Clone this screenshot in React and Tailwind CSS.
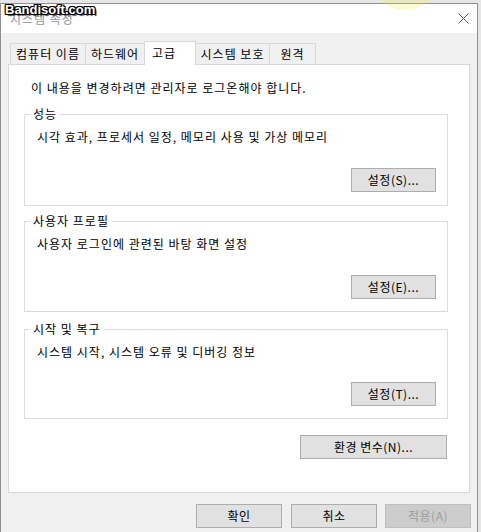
import React from "react";

const font = { fontFamily: '"Noto Sans CJK KR", "Noto Sans", sans-serif' };

const Button = ({ children, width = "w-[85px]", disabled = false }) => (
  <button
    type="button"
    className={`${width} h-[24px] border text-[12px] leading-[16px] tracking-[0.5px] flex items-center justify-center ${
      disabled
        ? "bg-[#cccccc] border-[#bfbfbf] text-[#9d9d9d]"
        : "bg-[#e1e1e1] border-[#adadad] text-black"
    }`}
  >
    {children}
  </button>
);

const Group = ({ title, text, action, height, margin, gap = "mt-[23px]" }) => (
  <div
    className={`relative ml-[15px] w-[424px] ${height} ${margin} border border-[#dcdcdc]`}
  >
    <span className="absolute top-[-9px] left-[5px] bg-white px-[3px] text-[12px] leading-[16px] tracking-[1px]">
      {title}
    </span>
    <div className="pt-[14px] pl-[12px] text-[12px] leading-[16px] tracking-[1px]">{text}</div>
    <div className={`flex justify-end pr-[11px] ${gap}`}>
      <Button>{action}</Button>
    </div>
  </div>
);

const tabs = [
  { label: "컴퓨터 이름", w: "w-[76px]" },
  { label: "하드웨어", w: "w-[60px]" },
  { label: "고급", w: "w-[52px]", active: true },
  { label: "시스템 보호", w: "w-[75px]" },
  { label: "원격", w: "w-[47px]" },
];

export default function App() {
  return (
    <div
      className="relative w-[481px] h-[532px] overflow-hidden bg-[#e6e6e6] pt-[3px] text-black"
      style={font}
    >
      <div className="w-[478px] h-[529px] border-l border-t border-r border-[#8f8f8f] flex flex-col">
        {/* title bar */}
        <div className="h-[29px] bg-white flex items-center justify-between pl-[9px] pr-[8px]">
          <span className="text-[12px] leading-[16px] tracking-[1px] text-[#8c96a0]">시스템 속성</span>
          <svg width="11" height="11" viewBox="0 0 11 11">
            <path d="M0.5 0.5 L10.5 10.5 M10.5 0.5 L0.5 10.5" stroke="#5a5a5a" strokeWidth="1" fill="none" />
          </svg>
        </div>

        {/* body */}
        <div className="flex-1 bg-[#f0f0f0] pt-[10px]">
          <div className="relative z-10 flex items-end h-[22px] pl-[9px]">
            {tabs.map((t, i) =>
              t.active ? (
                <div
                  key={t.label}
                  className={`${t.w} h-[24px] -ml-px bg-white border-l border-t border-r border-[#d9d9d9] pl-[7px] pt-[3px] text-[12px] leading-[16px] tracking-[1px]`}
                >
                  {t.label}
                </div>
              ) : (
                <div
                  key={t.label}
                  className={`${t.w} h-[21px] mb-[1px] ${i > 0 ? "-ml-px" : ""} bg-[#f0f0f0] border-l border-t border-r border-[#d9d9d9] flex items-center justify-center text-[12px] leading-[16px] tracking-[1px]`}
                >
                  {t.label}
                </div>
              )
            )}
          </div>

          <div className="-mt-px ml-[7px] w-[462px] h-[429px] bg-white border border-[#d9d9d9]">
            <div className="pt-[15px] pl-[22px] text-[12px] leading-[16px] tracking-[1px]">
              이 내용을 변경하려면 관리자로 로그온해야 합니다.
            </div>
            <Group
              title="성능"
              text="시각 효과, 프로세서 일정, 메모리 사용 및 가상 메모리"
              action="설정(S)..."
              height="h-[92px]"
              margin="mt-[18px]"
            />
            <Group
              title="사용자 프로필"
              text="사용자 로그인에 관련된 바탕 화면 설정"
              action="설정(E)..."
              height="h-[91px]"
              margin="mt-[15px]"
            />
            <Group
              title="시작 및 복구"
              text="시스템 시작, 시스템 오류 및 디버깅 정보"
              action="설정(T)..."
              height="h-[90px]"
              margin="mt-[17px]"
              gap="mt-[22px]"
            />
            <div className="flex justify-end pr-[22px] mt-[16px]">
              <Button width="w-[147px]">환경 변수(N)...</Button>
            </div>
          </div>

          <div className="flex justify-end pr-[6px] mt-[11px]">
            <Button width="w-[86px]">확인</Button>
            <div className="ml-[9px]">
              <Button width="w-[86px]">취소</Button>
            </div>
            <div className="ml-[8px]">
              <Button width="w-[86px]" disabled>
                적용(A)
              </Button>
            </div>
          </div>
        </div>
      </div>

      {/* cursor highlight */}
      <div className="absolute left-[366px] top-[-68px] w-[78px] h-[78px] rounded-full bg-[rgba(245,235,80,0.25)]" />

      {/* watermark */}
      <div
        className="absolute left-[5px] top-[2px] text-[13px] leading-[16px] font-bold text-white [text-shadow:-1px_-1px_0_#000,1px_-1px_0_#000,-1px_1px_0_#000,1px_1px_0_#000,0_1px_0_#000,0_-1px_0_#000,1px_0_0_#000,-1px_0_0_#000,2px_2px_1px_#444]"
        style={{ fontFamily: '"Liberation Sans", Arial, sans-serif' }}
      >
        Bandisoft.com
      </div>
    </div>
  );
}
